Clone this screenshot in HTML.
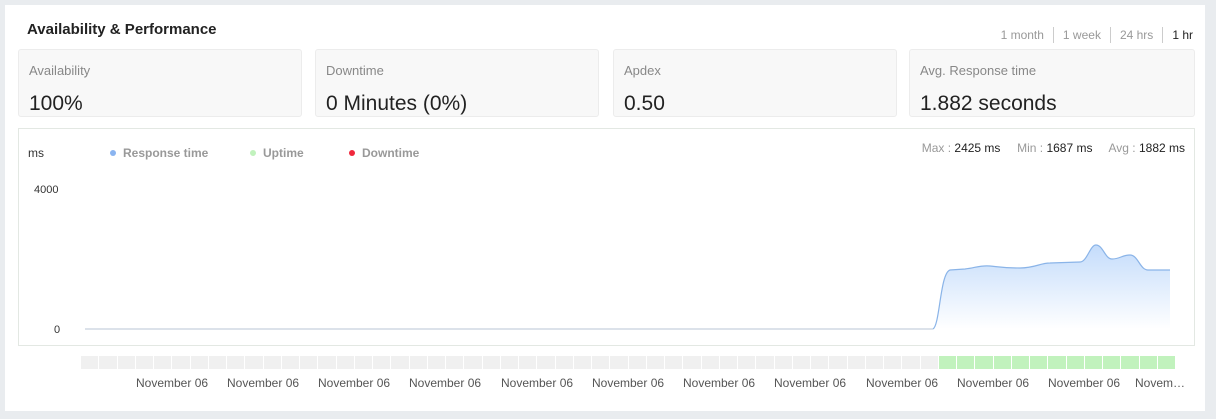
<!DOCTYPE html>
<html><head><meta charset="utf-8"><style>
body{margin:0;background:#e9ecef;font-family:"Liberation Sans",sans-serif;width:1216px;height:419px;overflow:hidden;position:relative}
.card{position:absolute;left:5px;top:5px;width:1200px;height:406px;background:#fff}
.t{position:absolute;left:22px;top:16px;font-size:15px;font-weight:bold;color:#222}
.rng{position:absolute;right:12px;top:22px;font-size:12px;color:#999;display:flex}
.rng span{padding:0 9px;border-left:1px solid #ccc;line-height:16px}
.rng span:first-child{border:none}
.rng span:last-child{color:#222;padding-right:0}
.s{position:absolute;top:44px;height:68px;background:#f8f8f8;border:1px solid #ececec;border-radius:3px;box-sizing:border-box}
.s .l{position:absolute;left:10px;top:13px;font-size:13px;color:#888}
.s .v{position:absolute;left:10px;top:42px;font-size:21px;color:#222}
.ch{position:absolute;left:13px;top:123px;width:1177px;height:218px;border:1px solid #e3e8e3;box-sizing:border-box}
.sm{position:absolute;font-size:12px;color:#333}
.lg{position:absolute;top:17px;font-size:12px;color:#999;font-weight:bold}
.lg i{display:inline-block;width:6px;height:6px;border-radius:50%;margin-right:7px;vertical-align:1px}
.bar{position:absolute;left:76px;top:351px;display:flex;gap:1px}
.bar b{width:17.25px;height:13px;background:#f0f0f0}
.bar b.g{background:#c1f2bd}
.xl{position:absolute;top:371px;font-size:12px;color:#555}
</style></head><body>
<div class="card">
<div class="t">Availability &amp; Performance</div>
<div class="rng"><span>1 month</span><span>1 week</span><span>24 hrs</span><span>1 hr</span></div>
<div class="s" style="left:13px;width:284px"><div class="l">Availability</div><div class="v">100%</div></div>
<div class="s" style="left:310px;width:284px"><div class="l">Downtime</div><div class="v">0 Minutes (0%)</div></div>
<div class="s" style="left:608px;width:284px"><div class="l">Apdex</div><div class="v">0.50</div></div>
<div class="s" style="left:904px;width:286px"><div class="l">Avg. Response time</div><div class="v">1.882 seconds</div></div>
<div class="ch">
<div class="sm" style="left:9px;top:17px">ms</div>
<div class="lg" style="left:91px"><i style="background:#8ab4f0"></i>Response time</div>
<div class="lg" style="left:231px"><i style="background:#c1f2bd"></i>Uptime</div>
<div class="lg" style="left:330px"><i style="background:#f0283c"></i>Downtime</div>
<div class="sm" style="right:9px;top:12px;color:#999">Max : <span style="color:#222">2425 ms</span>&nbsp;&nbsp;&nbsp;&nbsp; Min : <span style="color:#222">1687 ms</span>&nbsp;&nbsp;&nbsp;&nbsp; Avg : <span style="color:#222">1882 ms</span></div>
<div class="sm" style="left:15px;top:55px;font-size:11px">4000</div>
<div class="sm" style="left:35px;top:195px;font-size:11px">0</div>
</div>
<svg style="position:absolute;left:0;top:0" width="1200" height="406">
<defs><linearGradient id="gr" x1="0" y1="0" x2="0" y2="1"><stop offset="0" stop-color="#c4dcfb"/><stop offset="1" stop-color="#fff"/></linearGradient></defs>
<path d="M928 324 C935 320 935 268 945 265 L960 264 C970 263 975 260 985 261 C995 262 1000 263 1015 263 C1030 263 1035 258 1045 258 L1075 257 C1082 257 1085 240 1091 240 C1098 240 1100 254 1107 254 C1115 254 1117 250 1125 250 C1133 250 1135 265 1143 265 L1165 265 L1165 324 Z" fill="url(#gr)"/>
<path d="M80 324 L928 324" stroke="#b8c4d4" stroke-width="1"/>
<path d="M928 324 C935 320 935 268 945 265 L960 264 C970 263 975 260 985 261 C995 262 1000 263 1015 263 C1030 263 1035 258 1045 258 L1075 257 C1082 257 1085 240 1091 240 C1098 240 1100 254 1107 254 C1115 254 1117 250 1125 250 C1133 250 1135 265 1143 265 L1165 265" fill="none" stroke="#8ab4e8" stroke-width="1.2"/>
</svg>
<div class="bar">
<b></b><b></b><b></b><b></b><b></b><b></b><b></b><b></b><b></b><b></b><b></b><b></b><b></b><b></b><b></b><b></b><b></b><b></b><b></b><b></b><b></b><b></b><b></b><b></b><b></b><b></b><b></b><b></b><b></b><b></b><b></b><b></b><b></b><b></b><b></b><b></b><b></b><b></b><b></b><b></b><b></b><b></b><b></b><b></b><b></b><b></b><b></b><b class="g"></b><b class="g"></b><b class="g"></b><b class="g"></b><b class="g"></b><b class="g"></b><b class="g"></b><b class="g"></b><b class="g"></b><b class="g"></b><b class="g"></b><b class="g"></b><b class="g"></b>
</div>
<div class="xl" style="left:131px">November 06</div>
<div class="xl" style="left:222px">November 06</div>
<div class="xl" style="left:313px">November 06</div>
<div class="xl" style="left:404px">November 06</div>
<div class="xl" style="left:496px">November 06</div>
<div class="xl" style="left:587px">November 06</div>
<div class="xl" style="left:678px">November 06</div>
<div class="xl" style="left:769px">November 06</div>
<div class="xl" style="left:861px">November 06</div>
<div class="xl" style="left:952px">November 06</div>
<div class="xl" style="left:1043px">November 06</div>
<div class="xl" style="left:1130px">Novem…</div>
</div>
</body></html>
